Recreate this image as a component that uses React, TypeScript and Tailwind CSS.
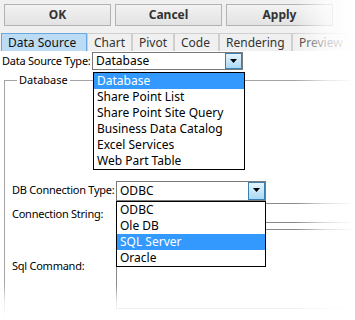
const font = "font-['Noto_Sans',sans-serif] text-[11px]";

type Tab = { label: string; width: number; active?: boolean };

const tabs: Tab[] = [
  { label: "Data Source", width: 86, active: true },
  { label: "Chart", width: 45 },
  { label: "Pivot", width: 42 },
  { label: "Code", width: 45 },
  { label: "Rendering", width: 73 },
  { label: "Preview", width: 62 },
];

const ArrowButton = () => (
  <div className="flex h-full w-[17px] items-center justify-center border border-[#3c7fb1] bg-gradient-to-b from-[#e5f4fc] to-[#a9d9f5]">
    <svg width="8" height="5" viewBox="0 0 8 5">
      <path d="M0 0h7L3.5 4z" fill="#000" />
    </svg>
  </div>
);

const Select = ({ value, className }: { value: string; className: string }) => (
  <div className={`flex shrink-0 items-stretch border border-[#7a7a7a] bg-white ${className}`}>
    <div className="flex flex-1 items-center pl-[3px] text-[12px] text-black">{value}</div>
    <ArrowButton />
  </div>
);

const List = ({ items, selected, className }: { items: string[]; selected: number; className: string }) => (
  <ul className={`absolute z-10 border border-black bg-white text-[12px] ${className}`}>
    {items.map((item, i) => (
      <li
        key={item}
        className={`flex h-[16px] items-center whitespace-nowrap pl-[3px] ${i === selected ? "bg-[#3399ff] text-white" : "text-black"}`}
      >
        {item}
      </li>
    ))}
  </ul>
);

const label = "shrink-0 whitespace-nowrap tracking-[-0.25px] text-black";

export default function App() {
  return (
    <div className={`relative h-[320px] w-[355px] overflow-hidden bg-white text-[#1a1a1a] ${font}`}>
      {/* toolbar */}
      <div className="bg-[#f0f0f0] pt-[4px]">
        <div className="flex gap-[4px] px-[4px]">
          {["OK", "Cancel", "Apply"].map((b) => (
            <button
              key={b}
              className="flex h-[22px] w-[107px] items-center justify-center border border-[#b3b3b3] bg-gradient-to-b from-[#f2f2f2] to-[#e3e3e3] text-[12px] font-bold text-[#333]"
            >
              {b}
            </button>
          ))}
        </div>
        <div className="mt-[7px] flex pl-[1px]">
          {tabs.map((t) => (
            <div
              key={t.label}
              style={{ width: t.width }}
              className={`flex h-[18px] shrink-0 items-center whitespace-nowrap border border-b-0 pl-[6px] text-[12px] ${
                t.active
                  ? "border-[#6aa8de] bg-[#bcdcf5] text-[#111]"
                  : "border-[#cfcfcf] bg-[#f0f0f0] text-[#333]"
              }`}
            >
              {t.label}
            </div>
          ))}
        </div>
      </div>

      {/* body */}
      <div className="relative pt-[1px]">
        <div className="flex items-center">
          <span className={`w-[92px] pl-[2px] ${label}`}>Data Source Type:</span>
          <Select value="Database" className="h-[18px] w-[151px]" />
        </div>
        <List
          className="left-[93px] top-[21px] w-[152px]"
          selected={0}
          items={["Database", "Share Point List", "Share Point Site Query", "Business Data Catalog", "Excel Services", "Web Part Table"]}
        />

        <fieldset className="ml-[4px] mt-[2px] h-[260px] border-l border-t border-[#a5a5a5] pl-[7px]">
          <legend className="ml-[5px] px-[2px] text-black">Database</legend>
          <div className="relative mt-[92px]">
            <div className="flex items-center">
              <span className={`w-[104px] ${label}`}>DB Connection Type:</span>
              <Select value="ODBC" className="h-[20px] w-[150px]" />
            </div>
            <List
              className="left-[104px] top-[20px] w-[150px]"
              selected={2}
              items={["ODBC", "Ole DB", "SQL Server", "Oracle"]}
            />
            <div className="mt-[2px] flex">
              <span className={`w-[104px] pt-[3px] ${label}`}>Connection String:</span>
              <div className="h-[20px] flex-1 border border-r-0 border-[#8a8a8a]" />
            </div>
            <div className="mt-[6px] flex">
              <span className={`w-[104px] pt-[29px] ${label}`}>Sql Command:</span>
              <div className="h-[80px] flex-1 border border-r-0 border-[#8a8a8a]" />
            </div>
          </div>
        </fieldset>
      </div>

      {/* fade out right and bottom */}
      <div className="pointer-events-none absolute inset-y-0 right-0 w-[60px] bg-gradient-to-r from-transparent via-white/70 to-white" />
      <div className="pointer-events-none absolute inset-x-0 bottom-0 h-[36px] bg-gradient-to-b from-transparent via-white/80 to-white" />
    </div>
  );
}
